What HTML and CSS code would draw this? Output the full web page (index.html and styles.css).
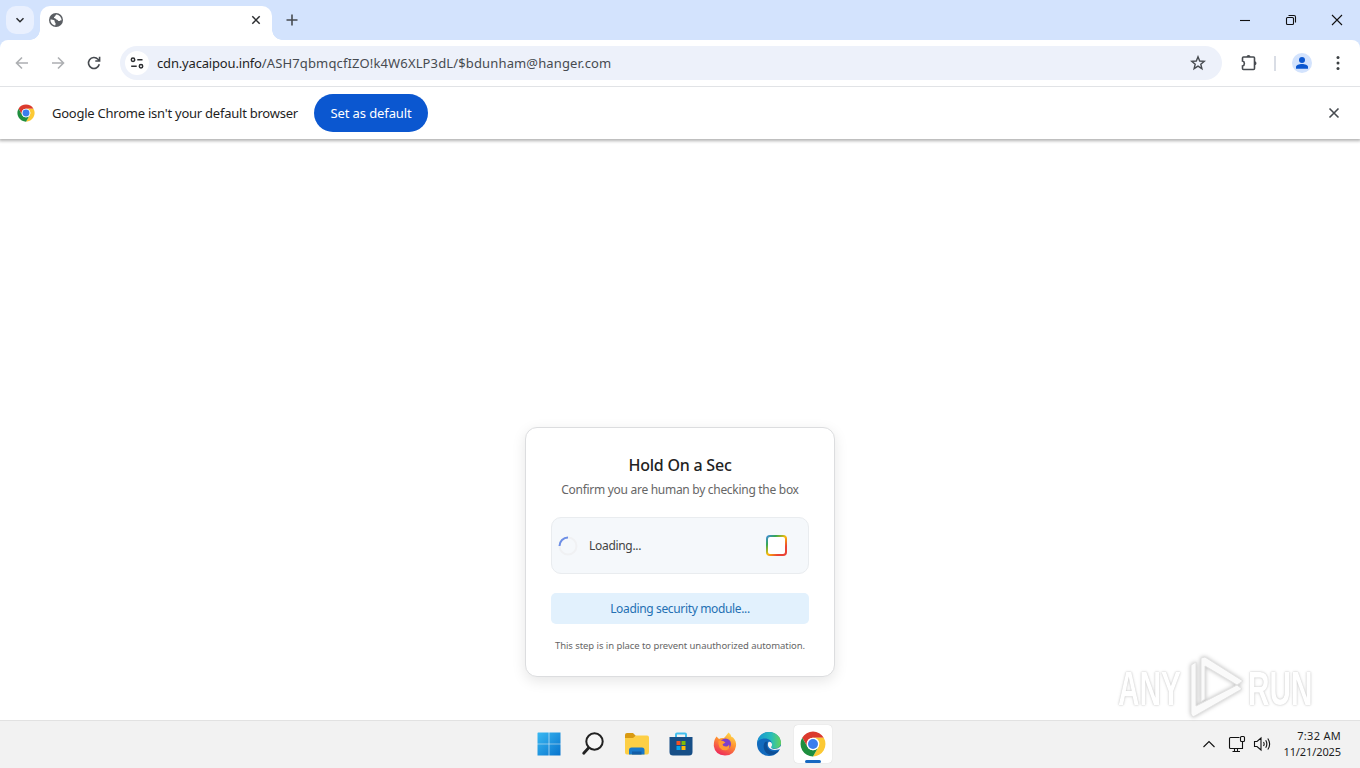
FILE: index.html
```html
<!DOCTYPE html>
<html lang="en">
<head>
  <meta charset="UTF-8">
  <title>Hold On a Sec</title>
  <link rel="stylesheet" href="styles.css">
</head>
<body>
  <svg class="defs">
    <symbol id="chrome" viewBox="0 0 48 48">
      <circle cx="24" cy="24" r="23" fill="#fff"/>
      <path fill="#db3a2e" d="M4.1 12.5A23 23 0 0 1 43.9 12.5H24A11.5 11.5 0 0 0 14 29.7z"/>
      <path fill="#fcc934" d="M43.9 12.5A23 23 0 0 1 24 47L34 29.7A11.5 11.5 0 0 0 24 12.5z"/>
      <path fill="#1e8e3e" d="M24 47A23 23 0 0 1 4.1 12.5L14 29.7A11.5 11.5 0 0 0 34 29.7z"/>
      <circle cx="24" cy="24" r="11.5" fill="#fff"/>
      <circle cx="24" cy="24" r="9.2" fill="#3b7ded"/>
    </symbol>
  </svg>

  <header class="tabstrip">
    <div class="tab-search">
      <svg width="12" height="12" viewBox="0 0 12 12"><path class="line dark thick" d="M2.5 4.3 6 7.8 9.5 4.3"/></svg>
    </div>
    <div class="tab">
      <svg width="16" height="16" viewBox="0 0 16 16">
        <circle cx="8" cy="8" r="7" fill="#5a5e63"/>
        <path fill="#fff" d="M8.8 2.5c-1.5 0-1 1.5-2 2-1.2.6-1 1.5-.2 1.7 1.4.3 1.3 1.3 2.5 1.5 1 .2.7 1.4 2 1.3 1.1 0 1.4-1.2 2.6-.6C13.4 5.3 11.5 3 8.8 2.5zM2.5 7.5c1 .1 3.2.1 4 .9.7.8-.4 1.5.5 2 .9.5.7 1.7.2 3C4.5 13 2.2 10.5 2.5 7.5z"/>
      </svg>
      <svg width="12" height="12" viewBox="0 0 12 12"><path class="line dark" d="M2.3 2.3 9.7 9.7M9.7 2.3 2.3 9.7"/></svg>
    </div>
    <svg class="new-tab" width="12" height="12" viewBox="0 0 12 12"><path class="line thick" d="M6 .5V11.5M.5 6H11.5"/></svg>
    <div class="window-buttons">
      <svg width="12" height="12" viewBox="0 0 12 12"><path class="line black" d="M1 6.5H11"/></svg>
      <svg width="12" height="12" viewBox="0 0 12 12"><rect class="line black" x="1.5" y="3.5" width="7" height="7" rx="1"/><path class="line black" d="M3.5 1.5H9Q10.5 1.5 10.5 3V8.5"/></svg>
      <svg width="12" height="12" viewBox="0 0 12 12"><path class="line black" d="M1 1 11 11M11 1 1 11"/></svg>
    </div>
  </header>

  <div class="toolbar">
    <div class="nav">
      <svg width="16" height="16" viewBox="0 0 16 16"><path class="line muted" d="M14 8H3M8 2.5 2.5 8 8 13.500"/></svg>
      <svg width="16" height="16" viewBox="0 0 16 16"><path class="line muted" d="M2 8H13M8 2.5 13.5 8 8 13.500"/></svg>
      <svg width="16" height="16" viewBox="0 0 16 16"><path class="line thick" d="M13.3 9.3A5.5 5.5 0 1 1 12 4.2L13.5 5.7M13.6 1.8V6H9.3"/></svg>
    </div>
    <div class="omnibox">
      <span class="site-info">
        <svg width="14" height="12" viewBox="0 0 14 12"><g class="line dark"><circle cx="3" cy="2.7" r="1.7"/><path d="M7.3 2.7H12.5M1.2 9.3H6.7"/><circle cx="11" cy="9.3" r="1.7"/></g></svg>
      </span>
      <span class="url"><span class="host">cdn.yacaipou.info</span>/ASH7qbmqcfIZO!k4W6XLP3dL/$bdunham@hanger.com</span>
      <svg class="star" width="16" height="16" viewBox="0 0 16 16"><path class="line" d="M8 1.8 9.7 6 14.3 6.3 10.8 9.2 11.9 13.7 8 11.2 4.1 13.7 5.2 9.2 1.7 6.3 6.3 6z"/></svg>
    </div>
    <div class="toolbar-right">
      <svg width="18" height="18" viewBox="0 0 18 18"><path class="line thick" d="M3.500 3H13.500Q14.500 3 14.500 4V14.500Q14.500 15.500 13.500 15.500H3.500Q2.500 15.500 2.500 14.500V12C5 11.500 5 7.500 2.500 7V4Q2.500 3 3.500 3z"/><path fill="#474b50" d="M6.500 3a2 2 0 0 1 4 0zM14.500 7.300a2 2 0 0 1 0 4z"/></svg>
      <span class="divider"></span>
      <svg width="20" height="20" viewBox="0 0 20 20"><circle cx="10" cy="10" r="10" fill="#d3e3fd"/><circle cx="10" cy="7" r="3" fill="#0b57d0"/><path fill="#0b57d0" d="M4 15.800V14c0-4 12-4 12 0v1.800z"/></svg>
      <svg class="more" width="4" height="16" viewBox="0 0 4 16"><g fill="#3c4043"><circle cx="2" cy="2.500" r="1.500"/><circle cx="2" cy="8" r="1.500"/><circle cx="2" cy="13.500" r="1.500"/></g></svg>
    </div>
  </div>

  <div class="infobar">
    <svg width="18" height="18"><use href="#chrome"/></svg>
    <span class="infobar-text">Google Chrome isn't your default browser</span>
    <button class="default-button">Set as default</button>
    <svg class="infobar-close" width="12" height="12" viewBox="0 0 12 12"><path class="line thick" d="M1.500 1.500 10.500 10.500M10.500 1.500 1.500 10.500"/></svg>
  </div>

  <main class="page">
    <section class="card">
      <h1>Hold On a Sec</h1>
      <p class="subtitle">Confirm you are human by checking the box</p>
      <div class="check-row">
        <svg class="spinner" width="20" height="20" viewBox="0 0 20 20"><circle cx="10" cy="10" r="8.500" fill="none" stroke="#f0f1f3" stroke-width="2"/><path fill="none" stroke="#6d8fe6" stroke-width="2" d="M1.500 10A8.500 8.500 0 0 1 10 1.500"/></svg>
        <span class="check-label">Loading...</span>
        <span class="checkbox"></span>
      </div>
      <div class="status">Loading security module...</div>
      <p class="note">This step is in place to prevent unauthorized automation.</p>
    </section>
  </main>

  <footer class="taskbar">
    <div class="apps">
      <span class="app">
        <svg width="24" height="24" viewBox="0 0 24 24"><defs><linearGradient id="win" x2="1" y2="1"><stop stop-color="#3ab9f2"/><stop offset="1" stop-color="#0874cd"/></linearGradient></defs><path fill="url(#win)" d="M1 .5H11.700V11.700H.5V1zM12.300 .5H23.500V11.700H12.300zM.5 12.300H11.700V23.500H.5zM12.300 12.300H23.500V23.500H12.300z"/></svg>
      </span>
      <span class="app">
        <svg width="24" height="24" viewBox="0 0 24 24"><circle cx="13.500" cy="9.500" r="8.200" fill="#f7f7f7" stroke="#222" stroke-width="2"/><path stroke="#222" stroke-width="2.800" stroke-linecap="round" d="M7.500 16 2.700 21.300"/></svg>
      </span>
      <span class="app">
        <svg width="26" height="24" viewBox="0 0 26 24"><path fill="#d99a12" d="M1 3Q1 1 3 1H9L12 4 9 7H1z"/><path fill="#fdcf45" d="M1 6H9L12 3.500H23Q25 3.500 25 5.500V20Q25 22.500 23 22.500H3Q1 22.500 1 20.500z"/><path fill="#1979ca" d="M5 22.500V18Q5 15.500 7.500 15.500H18Q20.500 15.500 20.500 18V22.500z"/><path fill="#125da6" d="M8 19.500H17.500V22.500H8z"/></svg>
      </span>
      <span class="app">
        <svg width="24" height="24" viewBox="0 0 24 24"><path fill="none" stroke="#43bfee" stroke-width="2" d="M7 6V2.500Q7 1.500 8 1.500H16Q17 1.500 17 2.500V6"/><path fill="#174f87" d="M.5 5H23.500V20Q23.500 23.500 20 23.500H4Q.5 23.500 .5 20z"/><path fill="#f25325" d="M7.500 9H11.500V13H7.500z"/><path fill="#80bc06" d="M12.500 9H16.500V13H12.500z"/><path fill="#05a6f0" d="M7.500 14H11.500V18H7.500z"/><path fill="#ffba08" d="M12.500 14H16.500V18H12.500z"/></svg>
      </span>
      <span class="app">
        <svg width="24" height="24" viewBox="0 0 24 24"><defs><linearGradient id="fox" x1=".8" y1="0" x2=".3" y2="1"><stop stop-color="#ffe14b"/><stop offset=".45" stop-color="#ff9130"/><stop offset="1" stop-color="#ed265d"/></linearGradient></defs><path fill="url(#fox)" d="M3.500 4.500 6 7Q8 5.500 11 6 13 4 15.500 .5 18 2 18.500 5 20 5 20.500 6 23.500 9 23 14 21.500 23.500 12 23.500 2 23 .8 14 .5 8.500 3.500 4.500z"/><circle cx="12.500" cy="12" r="5.500" fill="#7d3fcb"/><path fill="#ff9b33" d="M5.500 9Q9 7.500 12.500 10.500 10.500 11.500 9.500 12.500 10 15 14 14.500 15.500 14 16 12.500 17.500 16 14 18 9 19 6.500 15.500 5 12 5.500 9z"/></svg>
      </span>
      <span class="app">
        <svg width="26" height="26" viewBox="0 0 26 26"><defs><linearGradient id="edge" x2="1"><stop stop-color="#1794d4"/><stop offset=".6" stop-color="#28bdb9"/><stop offset="1" stop-color="#65d35b"/></linearGradient></defs><circle cx="13" cy="13" r="12" fill="#126abd"/><path fill="url(#edge)" d="M1 12C2 5 7 1 13 1 21 1 25 7 25 12 25 16 21 18.500 17 17.500 14.500 17 15.300 15.500 16 14.500 16.500 10 13 7.500 9 7.500 5 7.500 2 9 1 12z"/><path fill="#0c4e96" d="M9 11C6 15 8 22 14 24 18 24 21.500 22 23 19.500 15 23 8.500 17 11.500 10.500z"/><path fill="#f3f3f3" d="M12.500 11C10 16 15 20.500 22.500 18.500L26 17.500 25 15C22 18.500 17 18.500 15.500 17 14.500 16 16.500 15 16 13 15.500 11 13.500 10.200 12.500 11z"/></svg>
      </span>
      <span class="app active">
        <svg width="26" height="26"><use href="#chrome"/></svg>
      </span>
    </div>
    <div class="tray">
      <svg width="14" height="10" viewBox="0 0 14 10"><path class="line black thin" d="M1.500 8 7 2.500 12.500 8"/></svg>
      <svg class="network" width="18" height="18" viewBox="0 0 18 18"><path class="line black thin" d="M11.500 2.500H2.500Q1.500 2.500 1.500 3.500V12.500Q1.500 13.500 2.500 13.500H14.500V7M6.500 13.500V16.500M9.500 13.500V16.500M4.500 16.500H12"/><rect class="line black thin" x="12.500" y="1.500" width="4" height="5" rx="1"/></svg>
      <svg class="volume" width="18" height="16" viewBox="0 0 18 16"><path class="line black thin" d="M1.500 5.500H4L8 2V14L4 10.500H1.500zM10.500 6Q11.800 8 10.500 10M12.700 4.300Q15 8 12.700 11.700M14.800 2.500Q18.500 8 14.800 13.500"/></svg>
      <div class="clock"><span class="time">7:32 AM</span><span>11/21/2025</span></div>
    </div>
  </footer>

  <div class="watermark">
    <span>ANY</span>
    <svg width="58" height="66" viewBox="0 0 58 66">
      <g class="mark">
        <path d="M4 9 9 6V50L50 29 55 33 6 61 4 58z"/>
        <path fill-rule="evenodd" d="M14 2 18 1 56 25 50 29 18 10V43L14 46z"/>
      </g>
    </svg>
    <span>RUN</span>
  </div>
</body>
</html>
```
FILE: styles.css
```css
* {
  box-sizing: border-box;
}
body {
  margin: 0;
  height: 768px;
  display: flex;
  flex-direction: column;
  overflow: hidden;
  background: #fff;
  font-family: "Noto Sans", "Open Sans", sans-serif;
  color: #1f1f1f;
}
svg {
  display: block;
  flex: none;
}
.defs {
  position: absolute;
  width: 0;
  height: 0;
}

/* icon strokes */
.line {
  fill: none;
  stroke: #474b50;
  stroke-width: 1.4;
}
.thick {
  stroke-width: 1.6;
}
.line.dark {
  stroke: #2b2d30;
  stroke-width: 1.5;
}
.line.black {
  stroke: #111;
  stroke-width: 1.1;
}
.line.muted {
  stroke: #adafb2;
  stroke-width: 1.6;
}

/* tabs */
.tabstrip {
  height: 40px;
  flex: none;
  display: flex;
  align-items: center;
  padding-left: 6px;
  background: #d3e3fd;
}
.tab-search {
  width: 28px;
  height: 28px;
  border-radius: 10px;
  background: #e9f0fe;
  display: grid;
  place-items: center;
}
.tab {
  position: relative;
  align-self: flex-end;
  width: 232px;
  height: 34px;
  margin-left: 6px;
  padding: 0 10px 6px 8px;
  display: flex;
  align-items: center;
  justify-content: space-between;
  background: #fff;
  border-radius: 10px 10px 0 0;
}
.tab::before,
.tab::after {
  content: '';
  position: absolute;
  bottom: 0;
  width: 10px;
  height: 10px;
}
.tab::before {
  left: -10px;
  background: radial-gradient(circle at 0 0, transparent 9.5px, #fff 10px);
}
.tab::after {
  right: -10px;
  background: radial-gradient(circle at 100% 0, transparent 9.5px, #fff 10px);
}
.new-tab {
  margin-left: 14px;
}
.window-buttons {
  margin-left: auto;
  display: flex;
  gap: 34px;
  padding-right: 17px;
}

/* toolbar */
.toolbar {
  height: 47px;
  flex: none;
  display: flex;
  align-items: center;
  border-bottom: 1px solid #e1e3e6;
  background: linear-gradient(#d3e3fd, #d3e3fd) top / 100% 8px no-repeat;
  position: relative;
  z-index: 0;
}
.toolbar::before {
  content: '';
  position: absolute;
  inset: 0;
  z-index: -1;
  background: #fff;
  border-radius: 8px 8px 0 0;
}
.nav {
  display: flex;
  gap: 20px;
  padding-left: 14px;
  width: 120px;
}
.omnibox {
  width: 1102px;
  height: 34px;
  border-radius: 17px;
  background: #edf1fa;
  display: flex;
  align-items: center;
  padding: 0 16px 0 5px;
}
.site-info {
  width: 24px;
  height: 24px;
  border-radius: 50%;
  background: #fff;
  display: grid;
  place-items: center;
}
.url {
  margin-left: 8px;
  font-size: 13px;
  letter-spacing: .14px;
  color: #474b50;
  white-space: nowrap;
}
.host {
  letter-spacing: -.17px;
  color: #1f1f1f;
}
.star {
  margin-left: auto;
}
.toolbar-right {
  display: flex;
  align-items: center;
  padding-left: 18px;
}
.divider {
  width: 2px;
  height: 15px;
  margin: 0 16px;
  background: #d9dde5;
}
.more {
  margin-left: 24px;
}

/* default browser bar */
.infobar {
  height: 52px;
  flex: none;
  display: flex;
  align-items: center;
  padding: 0 20px 0 17px;
  background: #fff;
  box-shadow: 0 1px 3px 1px rgba(0, 0, 0, .3);
  font-size: 13px;
}
.infobar-text {
  margin-left: 17px;
  width: 246px;
  letter-spacing: -.24px;
  white-space: nowrap;
}
.default-button {
  width: 114px;
  height: 38px;
  margin-left: 16px;
  padding: 0;
  border: 0;
  border-radius: 19px;
  background: #0b57d0;
  color: #fff;
  font: inherit;
  letter-spacing: -.1px;
}
.infobar-close {
  margin-left: auto;
}

/* captcha card */
.page {
  flex: 1;
  display: flex;
  justify-content: center;
  align-items: flex-end;
  padding-bottom: 43px;
}
.card {
  width: 310px;
  height: 250px;
  padding: 26px 25px 0;
  border: 1px solid #dcdddf;
  border-radius: 12px;
  background: #fff;
  box-shadow: 0 4px 14px rgba(0, 0, 0, .1);
  text-align: center;
  white-space: nowrap;
}
.card h1 {
  margin: 0;
  font-size: 16px;
  line-height: 22px;
  font-weight: 500;
  letter-spacing: -.23px;
  color: #222;
}
.subtitle {
  margin: 5px 0 18px;
  font-size: 12px;
  line-height: 18px;
  letter-spacing: -.29px;
  color: #666;
}
.check-row {
  height: 57px;
  display: flex;
  align-items: center;
  padding: 0 21px 0 6px;
  border: 1px solid #e9ecef;
  border-radius: 10px;
  background: #f5f8fb;
}
.check-label {
  margin-left: 11px;
  font-size: 12px;
  letter-spacing: -.3px;
  color: #444;
}
.checkbox {
  width: 21px;
  height: 21px;
  margin-left: auto;
  border: 2px solid transparent;
  border-radius: 4px;
  background:
    linear-gradient(#fff, #fff) padding-box,
    linear-gradient(135deg, #4285f4, #34a853 25%, #fbbc05 50%, #ea4335 75%) border-box;
}
.status {
  height: 31px;
  margin-top: 19px;
  border-radius: 5px;
  background: #e2f1fd;
  color: #2470b3;
  font-size: 12px;
  line-height: 31px;
  letter-spacing: -.35px;
}
.note {
  margin: 14px 0 0;
  font-size: 9.5px;
  line-height: 16px;
  letter-spacing: -.07px;
  color: #666;
}

/* taskbar */
.taskbar {
  height: 48px;
  flex: none;
  display: grid;
  grid-template-columns: 1fr auto 1fr;
  align-items: center;
  padding-bottom: 2px;
  background: #f2f2f2;
  border-top: 1px solid #e2e2e2;
}
.apps {
  grid-column: 2;
  display: flex;
  gap: 6px;
  margin-left: 2px;
}
.app {
  width: 38px;
  height: 38px;
  display: grid;
  place-items: center;
  border-radius: 4px;
}
.app.active {
  position: relative;
  background: #fff;
  box-shadow: 0 0 1px rgba(0, 0, 0, .2);
}
.app.active::after {
  content: '';
  position: absolute;
  left: 11px;
  bottom: 0;
  width: 16px;
  height: 3px;
  border-radius: 2px;
  background: #1668c1;
}
.tray {
  display: flex;
  align-items: center;
  justify-content: flex-end;
  padding-right: 19px;
}
.network {
  margin-left: 12px;
}
.volume {
  margin-left: 7px;
}
.clock {
  width: 70px;
  display: flex;
  flex-direction: column;
  align-items: flex-end;
  font-size: 11px;
  line-height: 16px;
  letter-spacing: -.1px;
}
.time {
  letter-spacing: .3px;
}

/* watermark lies over the page corner */
.watermark {
  position: absolute;
  left: 1118px;
  top: 656px;
  display: flex;
  align-items: center;
  gap: 3px;
  color: #fff;
  font: bold 48px/66px "Liberation Sans", sans-serif;
  text-shadow: 0 0 2px #c4c4c4, 0 0 4px #ddd;
}
.watermark span {
  width: 66px;
  transform: scaleX(.62);
  transform-origin: left;
  background: linear-gradient(transparent 33px, rgba(0, 0, 0, .07) 33px) text;
}
.watermark svg {
  filter: drop-shadow(0 0 2px #bbb);
}
.mark {
  fill: #fafafa;
  stroke: #e2e2e2;
  stroke-width: 1;
}
```
